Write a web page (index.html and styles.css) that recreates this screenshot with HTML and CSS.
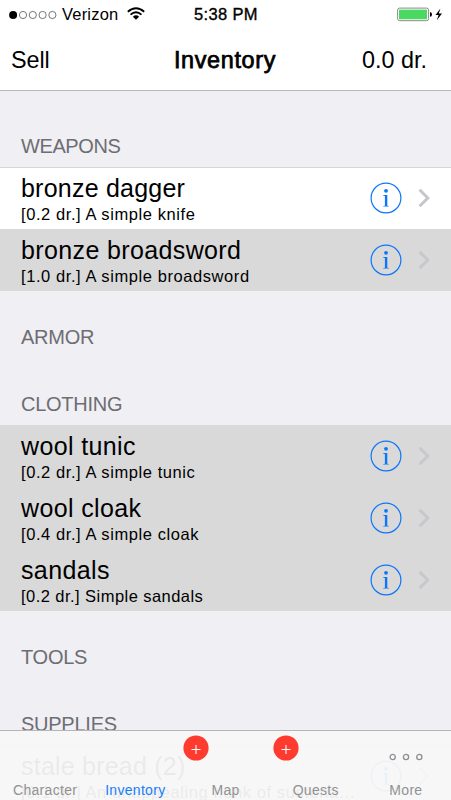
FILE: index.html
```html
<!DOCTYPE html>
<html lang="en">
<head>
<meta charset="utf-8">
<title>Inventory</title>
<link rel="stylesheet" href="styles.css">
</head>
<body>
<svg class="symbols" aria-hidden="true">
  <symbol id="info" viewBox="0 0 32 32">
    <circle cx="16" cy="16" r="14.9" fill="none" stroke="#0b76fa" stroke-width="1.2"/>
    <circle cx="16" cy="8.8" r="1.9" fill="#0b76fa"/>
    <path d="M13.3 13.1H17.3V23.7L18.8 24V24.5H13.2V24L14.9 23.7V13.9L13.3 13.7Z" fill="#0b76fa"/>
  </symbol>
  <symbol id="chevron" viewBox="0 0 12 20">
    <path d="M1.6 1.8L9.8 10L1.6 18.2" fill="none" stroke="#c5c5ca" stroke-width="3"/>
  </symbol>
</svg>
<div class="screen">
  <header class="top">
    <div class="status">
      <div class="carrier">
        <svg width="49" height="12" viewBox="0 0 49 12"><circle cx="4.1" cy="6" r="4"/><g fill="none" stroke="#555" stroke-width=".8"><circle cx="14" cy="6" r="3.6"/><circle cx="23.8" cy="6" r="3.6"/><circle cx="33.6" cy="6" r="3.6"/><circle cx="43.4" cy="6" r="3.6"/></g></svg>
        <span class="network">Verizon</span>
        <svg class="wifi" width="18" height="13" viewBox="0 0 18 13"><g fill="none" stroke="#000" stroke-width="1.8"><path d="M.8 4.7Q9-2.3 17.2 4.7"/><path d="M3.5 7.6Q9 3 14.5 7.6"/></g><path d="M5.9 9.7Q9 7 12.1 9.7L9 12.8Z"/></svg>
      </div>
      <div class="time">5:38 PM</div>
      <div class="power">
        <svg width="46" height="15" viewBox="0 0 46 15"><rect x=".6" y="1.1" width="31" height="12.6" rx="2" fill="#fff" stroke="#888"/><rect x="2" y="2.6" width="28" height="9.7" fill="#4bd964"/><path d="M33 5Q35 5.3 35 7.4T33 9.8Z"/><path d="M43.4 1.6L38.5 8H41.6L39.8 13.2L45 6.6H41.8Z"/></svg>
      </div>
    </div>
    <nav class="bar">
      <span class="sell">Sell</span>
      <h1>Inventory</h1>
      <span class="funds">0.0 dr.</span>
    </nav>
  </header>
  <main>
    <h2 class="first">WEAPONS</h2>
    <section>
      <div class="row light"><div class="text"><div class="name dagger">bronze dagger</div><div class="detail">[0.2 dr.] A simple knife</div></div><svg class="info"><use href="#info"/></svg><svg class="chevron"><use href="#chevron"/></svg></div>
      <div class="row"><div class="text"><div class="name">bronze broadsword</div><div class="detail">[1.0 dr.] A simple broadsword</div></div><svg class="info"><use href="#info"/></svg><svg class="chevron"><use href="#chevron"/></svg></div>
    </section>
    <h2>ARMOR</h2>
    <h2>CLOTHING</h2>
    <section>
      <div class="row"><div class="text"><div class="name">wool tunic</div><div class="detail">[0.2 dr.] A simple tunic</div></div><svg class="info"><use href="#info"/></svg><svg class="chevron"><use href="#chevron"/></svg></div>
      <div class="row"><div class="text"><div class="name">wool cloak</div><div class="detail">[0.4 dr.] A simple cloak</div></div><svg class="info"><use href="#info"/></svg><svg class="chevron"><use href="#chevron"/></svg></div>
      <div class="row"><div class="text"><div class="name">sandals</div><div class="detail sandals">[0.2 dr.] Simple sandals</div></div><svg class="info"><use href="#info"/></svg><svg class="chevron"><use href="#chevron"/></svg></div>
    </section>
    <h2>TOOLS</h2>
    <h2>SUPPLIES</h2>
    <section>
      <div class="row light"><div class="text"><div class="name dagger">stale bread (2)</div><div class="detail">[0.1 dr.] An unappealing hunk of sustena…</div></div><svg class="info"><use href="#info"/></svg><svg class="chevron"><use href="#chevron"/></svg></div>
    </section>
  </main>
  <footer class="tabs">
    <div class="tab">Character</div>
    <div class="tab active">Inventory</div>
    <div class="tab">Map<svg class="badge" viewBox="0 0 26 26"><circle cx="13" cy="13" r="12.6"/><path d="M8.5 14.5H17.5M13 10V19"/></svg></div>
    <div class="tab">Quests<svg class="badge" viewBox="0 0 26 26"><circle cx="13" cy="13" r="12.6"/><path d="M8.5 14.5H17.5M13 10V19"/></svg></div>
    <div class="tab"><svg class="dots" width="34" height="8" viewBox="0 0 34 8"><g fill="none" stroke="#8e8e8e" stroke-width="1.3"><circle cx="3.7" cy="4" r="2.6"/><circle cx="17" cy="4" r="2.6"/><circle cx="30.3" cy="4" r="2.6"/></g></svg>More</div>
  </footer>
</div>
</body>
</html>
```

FILE: styles.css
```css
* { box-sizing: border-box; }
body { margin: 0; font-family: "Liberation Sans", Arial, sans-serif; color: #000; }
.symbols { position: absolute; width: 0; height: 0; }
.screen { position: relative; width: 451px; height: 800px; overflow: hidden; background: #efeff4; }
svg { display: block; flex: none; }
.top { height: 91px; background: #fff; border-bottom: 1px solid #b9b9bc; }
.status { height: 29px; display: grid; grid-template-columns: 1fr auto 1fr; align-items: center; padding: 0 8px 0 9px; }
.carrier { display: flex; align-items: center; }
.network { margin-left: 4px; width: 57px; font-size: 16.5px; letter-spacing: .2px; white-space: nowrap; }
.wifi { margin-left: 8px; margin-top: -2px; }
.time { font-size: 16.5px; -webkit-text-stroke: .35px #000; letter-spacing: .35px; }
.power { display: flex; justify-content: flex-end; }
.bar { height: 61px; display: grid; grid-template-columns: 1fr auto 1fr; align-items: center; padding: 0 24px 0 11px; font-size: 23.4px; line-height: 60px; }
.sell { letter-spacing: -.1px; }
h1 { margin: 0; font-size: 23.4px; font-weight: 400; -webkit-text-stroke: .75px #000; letter-spacing: .65px; transform: translateX(6px); }
.funds { text-align: right; }
h2 { margin: 0; height: 67px; padding: 34px 0 0 21px; font-size: 20px; line-height: 25px; font-weight: 400; color: #6d6d72; letter-spacing: -.25px; }
h2.first { height: 76px; padding-top: 43px; letter-spacing: -.4px; }
.row { height: 62px; background: #d9d9d9; display: flex; align-items: flex-start; padding: 6px 20px 0 21px; }
.row .chevron { opacity: .8; }
.light { background: #fff; box-shadow: inset 0 1px #d5d5d9; }
.light .chevron { opacity: 1; }
.text { width: 349px; white-space: nowrap; }
.name { font-size: 25px; line-height: 30px; letter-spacing: .37px; }
.dagger { letter-spacing: .22px; }
.detail { margin-top: 1px; font-size: 16.5px; line-height: 20px; letter-spacing: .58px; }
.sandals { letter-spacing: .45px; }
.info { width: 32px; height: 32px; margin-top: 9px; }
.chevron { width: 12px; height: 20px; margin: 15px 0 0 16px; }
.tabs { position: absolute; inset: auto 0 0 0; height: 70px; display: flex; background: rgba(247, 247, 247, .95); border-top: 1px solid #b5b5b8; }
.tab { flex: 1; position: relative; padding-top: 50px; line-height: 18px; font-size: 14px; letter-spacing: .3px; color: #929292; text-align: center; white-space: nowrap; }
.active { color: #167efb; }
.badge { position: absolute; top: 4px; left: 2.5px; width: 26px; height: 26px; fill: #ff3b30; stroke: #fff; stroke-width: 1.1; }
.badge circle { stroke: none; }
.dots { position: absolute; left: 28px; top: 22px; }
```
